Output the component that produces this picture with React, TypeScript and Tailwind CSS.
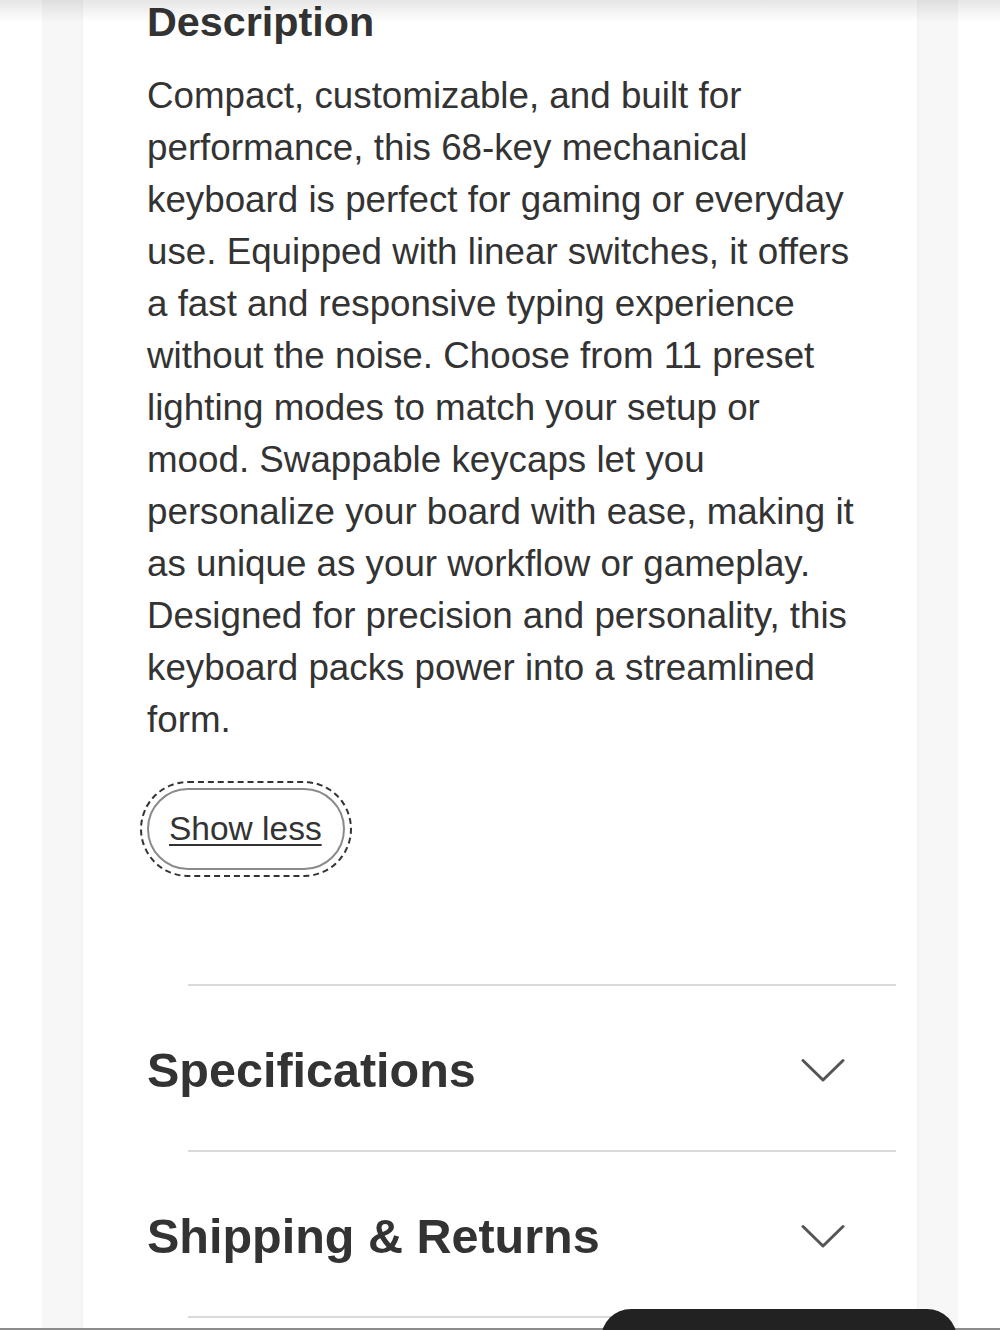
import React, { useState } from 'react';

const descriptionText =
  'Compact, customizable, and built for performance, this 68-key mechanical keyboard is perfect for gaming or everyday use. Equipped with linear switches, it offers a fast and responsive typing experience without the noise. Choose from 11 preset lighting modes to match your setup or mood. Swappable keycaps let you personalize your board with ease, making it as unique as your workflow or gameplay. Designed for precision and personality, this keyboard packs power into a streamlined form.';

const Chevron: React.FC = () => (
  <svg width="44" height="24" viewBox="0 0 44 24" fill="none" className="shrink-0">
    <path d="M2 2.5 L22 22 L42 2.5" stroke="#555555" strokeWidth="3" strokeLinecap="round" strokeLinejoin="round" />
  </svg>
);

const AccordionRow: React.FC<{ title: string }> = ({ title }) => {
  const [open, setOpen] = useState(false);
  return (
    <div>
      <div className="ml-[41px] h-[2px] bg-[#dadada]" />
      <button
        type="button"
        onClick={() => setOpen(!open)}
        className="flex h-[164px] w-full items-center justify-between pt-[4px] pr-[51px] text-left"
      >
        <span className="text-[48.5px] font-bold leading-none text-[#333333]">{title}</span>
        <Chevron />
      </button>
      {open && <div className="pb-6 text-[30px] text-[#333333]">Details coming soon.</div>}
    </div>
  );
};

export default function App() {
  const [expanded, setExpanded] = useState(true);

  return (
    <div className="relative h-[1330px] overflow-hidden bg-white font-['Liberation_Sans',Arial,sans-serif]">
      <div className="mx-[42px] h-full bg-[#f7f7f7] px-[41px]">
        <div className="h-full bg-white pl-[64px] pr-[21px] shadow-[0_0_3px_rgba(0,0,0,0.06)]">
          <h2 className="text-[41.3px] font-bold leading-[44px] text-[#333333]">Description</h2>
          <p
            className={`mt-[26px] max-w-[712px] text-[36.75px] leading-[52px] text-[#333333] ${
              expanded ? '' : 'line-clamp-4'
            }`}
          >
            {descriptionText}
          </p>

          <button
            type="button"
            onClick={() => setExpanded(!expanded)}
            className="mt-[42px] flex h-[82px] w-[198px] items-center rounded-full border-2 border-[#8a8a8a] pl-[20px] text-[33.5px] text-[#333333] underline decoration-2 underline-offset-[4px] outline-2 outline-offset-[5px] outline-dashed outline-[#333333]"
          >
            {expanded ? 'Show less' : 'Show more'}
          </button>

          <div className="mt-[114px]">
            <AccordionRow title="Specifications" />
            <AccordionRow title="Shipping & Returns" />
            <div className="ml-[41px] h-[2px] bg-[#dadada]" />
          </div>
        </div>
      </div>

      {/* header shadow from above the fold */}
      <div className="pointer-events-none absolute inset-x-0 top-0 h-[22px] bg-linear-to-b from-black/10 to-transparent" />

      {/* sticky add-to-cart bar */}
      <div className="pointer-events-none fixed bottom-0 left-0 right-0 h-[2px] bg-[#8c8c8c]" />
      <div className="fixed bottom-[-40px] left-[601px] h-[61px] w-[356px] rounded-[30px] bg-[#222222]" />
    </div>
  );
}
